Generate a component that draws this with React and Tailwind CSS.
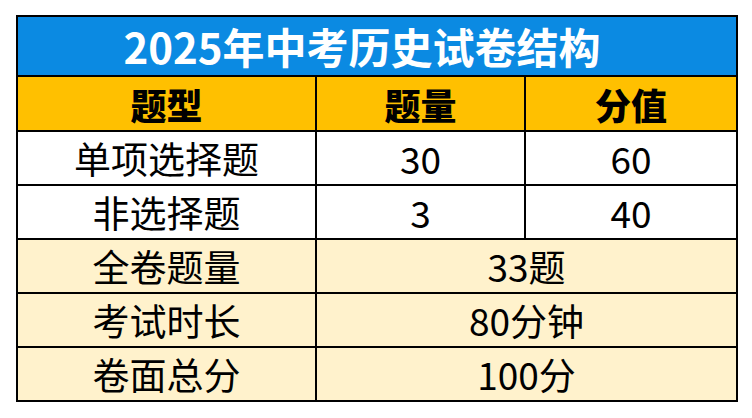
export default function App() {
  const font = { fontFamily: '"Noto Sans CJK SC", "Noto Sans", sans-serif' };
  const rows = [
    ['单项选择题', '30', '60'],
    ['非选择题', '3', '40'],
  ];
  const merged = [
    ['全卷题量', '33题'],
    ['考试时长', '80分钟'],
    ['卷面总分', '100分'],
  ];

  return (
    <div className="w-[752px] h-[418px] bg-white pt-[15px] pl-[16px]" style={font}>
      <table className="w-[720px] border-collapse border-2 border-black text-black table-fixed">
        <colgroup>
          <col className="w-[299px]" />
          <col className="w-[209px]" />
          <col className="w-[212px]" />
        </colgroup>
        <tbody>
          <tr className="h-[60px] bg-[#0b8ae2]">
            <td colSpan={3} className="border-2 border-black text-center text-white font-bold text-[42px] leading-none pr-[30px]">
              2025年中考历史试卷结构
            </td>
          </tr>
          <tr className="h-[55px] bg-[#ffc000]">
            <td className="border-2 border-black text-center font-black text-[36px] leading-none">题型</td>
            <td className="border-2 border-black text-center font-black text-[36px] leading-none">题量</td>
            <td className="border-2 border-black text-center font-black text-[36px] leading-none">分值</td>
          </tr>
          {rows.map(([a, b, c]) => (
            <tr key={a} className="h-[54px] bg-white">
              <td className="border-2 border-black text-center text-[37px] leading-none">{a}</td>
              <td className="border-2 border-black text-center text-[37px] leading-none">{b}</td>
              <td className="border-2 border-black text-center text-[37px] leading-none">{c}</td>
            </tr>
          ))}
          {merged.map(([a, b]) => (
            <tr key={a} className="h-[54px] bg-[#fff2cc]">
              <td className="border-2 border-black text-center text-[37px] leading-none">{a}</td>
              <td colSpan={2} className="border-2 border-black text-center text-[37px] leading-none">{b}</td>
            </tr>
          ))}
        </tbody>
      </table>
    </div>
  );
}
